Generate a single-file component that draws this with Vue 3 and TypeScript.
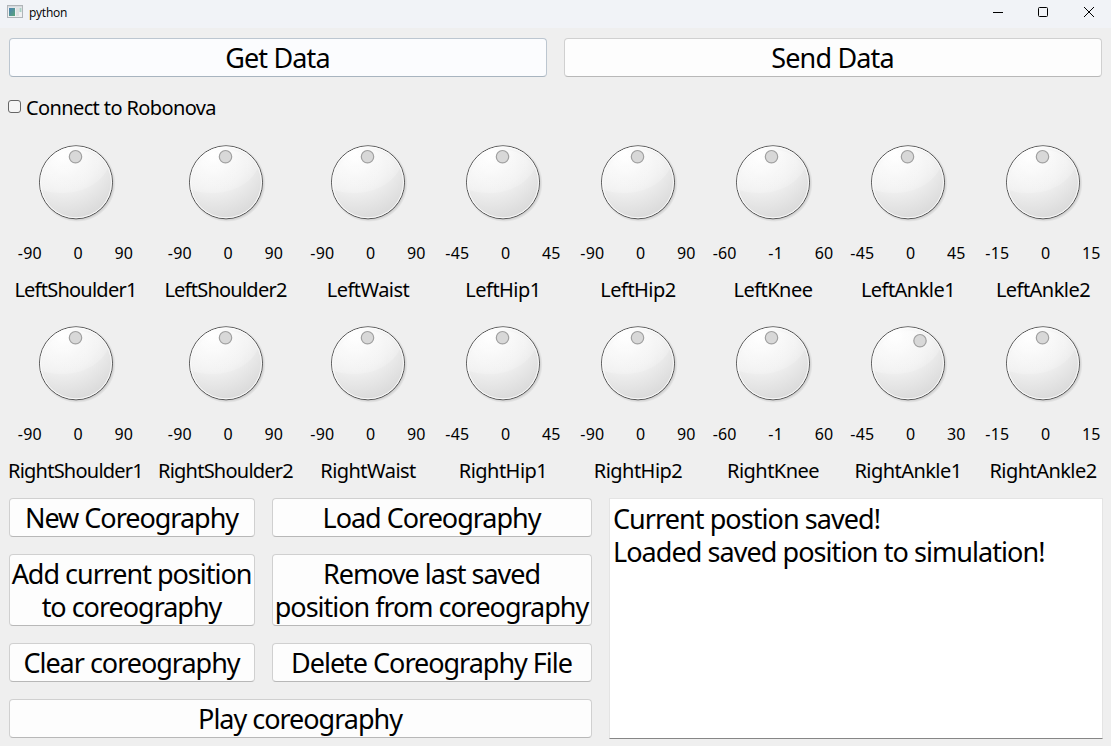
<script setup lang="ts">
interface Joint {
  name: string
  min: number
  value: number
  max: number
  knobX: number
  knobY: number
}

function joint(name: string, min: number, value: number, max: number, knobX = 40.5, knobY = 14.7): Joint {
  return { name, min, value, max, knobX, knobY }
}

const rows: Joint[][] = [
  [
    joint('LeftShoulder1', -90, 0, 90),
    joint('LeftShoulder2', -90, 0, 90),
    joint('LeftWaist', -90, 0, 90),
    joint('LeftHip1', -45, 0, 45),
    joint('LeftHip2', -90, 0, 90),
    joint('LeftKnee', -60, -1, 60, 39.5),
    joint('LeftAnkle1', -45, 0, 45),
    joint('LeftAnkle2', -15, 0, 15),
  ],
  [
    joint('RightShoulder1', -90, 0, 90),
    joint('RightShoulder2', -90, 0, 90),
    joint('RightWaist', -90, 0, 90),
    joint('RightHip1', -45, 0, 45),
    joint('RightHip2', -90, 0, 90),
    joint('RightKnee', -60, -1, 60, 39.5),
    joint('RightAnkle1', -45, 0, 30, 53, 17.7),
    joint('RightAnkle2', -15, 0, 15),
  ],
]

const messages: string[] = ['Current postion saved!', 'Loaded saved position to simulation!']
</script>

<template>
  <div class="window">
    <header class="titlebar">
      <svg class="app-icon" width="16" height="14" viewBox="0 0 16 14">
        <defs>
          <linearGradient id="appFill" x1="0" y1="0" x2="1" y2="1">
            <stop offset="0" stop-color="#4a80b4" />
            <stop offset="1" stop-color="#5aa578" />
          </linearGradient>
        </defs>
        <rect x="0.5" y="0.5" width="15" height="12" fill="#f0f1f2" stroke="#b0b4b8" />
        <rect x="1" y="1" width="14" height="1.5" fill="#d6dade" />
        <rect x="2" y="3" width="6" height="8" fill="url(#appFill)" />
        <rect x="9" y="3" width="3" height="8" fill="#dfe1e2" />
        <rect x="12.5" y="3" width="2" height="4" fill="#a9cfc4" />
      </svg>
      <span class="title">python</span>
      <div class="controls">
        <svg width="10" height="10" viewBox="0 0 10 10" overflow="visible"><path d="M1 5.5H11" stroke="#000" /></svg>
        <svg width="10" height="10" viewBox="0 0 10 10">
          <rect x="0.5" y="0.5" width="9" height="9" rx="1" fill="none" stroke="#000" />
        </svg>
        <svg width="10" height="10" viewBox="0 0 10 10"><path d="M0 0L10 10M10 0L0 10" stroke="#000" /></svg>
      </div>
    </header>

    <div class="top-actions">
      <button class="btn focused">Get Data</button>
      <button class="btn">Send Data</button>
    </div>

    <label class="connect"><span class="box"></span><span>Connect to Robonova</span></label>

    <svg class="defs" width="0" height="0">
      <defs>
        <radialGradient id="dialFill" gradientUnits="userSpaceOnUse" cx="28" cy="12" r="72">
          <stop offset="0" stop-color="#ffffff" />
          <stop offset="0.5" stop-color="#f0f0f0" />
          <stop offset="1" stop-color="#d6d6d6" />
        </radialGradient>
        <linearGradient id="dialShine" x1="0" y1="0" x2="0.6" y2="1">
          <stop offset="0" stop-color="#fff" stop-opacity="0.4" />
          <stop offset="1" stop-color="#fff" stop-opacity="0.15" />
        </linearGradient>
        <radialGradient id="dialShadow">
          <stop offset="0.9" stop-color="#000" stop-opacity="0.18" />
          <stop offset="1" stop-color="#000" stop-opacity="0" />
        </radialGradient>
      </defs>
    </svg>

    <section v-for="(row, r) in rows" :key="r" class="joints">
      <div v-for="j in row" :key="j.name" class="joint">
        <svg class="dial" width="82" height="81" viewBox="0 0 82 81">
          <circle cx="42.2" cy="41.5" r="38.5" fill="url(#dialShadow)" />
          <circle cx="41" cy="40.3" r="36.5" fill="url(#dialFill)" stroke="#555" stroke-width="1" />
          <circle cx="41" cy="40.3" r="35.5" fill="none" stroke="#fff" stroke-width="1" stroke-opacity="0.85" />
          <path d="M6 48A36 36 0 0 1 73 26C64 45 37 57 6 48Z" fill="url(#dialShine)" />
          <circle :cx="j.knobX" :cy="j.knobY" r="6.2" fill="#d8d8d8" stroke="#a0a0a0" stroke-width="1.2" />
        </svg>
        <div class="range">
          <span>{{ j.min }}</span><span>{{ j.value }}</span><span>{{ j.max }}</span>
        </div>
        <div class="name" :class="{ tight: j.name.includes('Shoulder') }">{{ j.name }}</div>
      </div>
    </section>

    <section class="bottom">
      <div class="actions">
        <button class="btn">New Coreography</button>
        <button class="btn">Load Coreography</button>
        <button class="btn">Add current position<br />to coreography</button>
        <button class="btn">Remove last saved<br />position from coreography</button>
        <button class="btn">Clear coreography</button>
        <button class="btn">Delete Coreography File</button>
        <button class="btn wide">Play coreography</button>
      </div>
      <div class="log">
        <div v-for="m in messages" :key="m">{{ m }}</div>
      </div>
    </section>
  </div>
</template>

<style>
body {
  margin: 0;
  background: #efefef;
}
</style>

<style scoped>
.window {
  width: 1111px;
  height: 746px;
  overflow: hidden;
  background: #efefef;
  color: #000;
  font-family: 'Noto Sans', 'Open Sans', sans-serif;
}
.titlebar {
  display: flex;
  height: 28px;
  box-sizing: border-box;
  padding: 0 17px 0 7px;
  background: #f1f3f7;
}
.app-icon {
  margin-top: 5px;
}
.title {
  margin-left: 6px;
  font-family: 'Open Sans', 'Noto Sans', sans-serif;
  font-size: 12px;
  line-height: 26px;
  letter-spacing: -0.25px;
}
.controls {
  display: flex;
  gap: 36px;
  margin-left: auto;
  padding-top: 7px;
}
.btn {
  display: block;
  box-sizing: border-box;
  margin: 0;
  padding: 2px 1px 2px 0;
  border: 1px solid #d0d0d0;
  border-bottom-color: #b8b8b8;
  border-radius: 4px;
  background: #fdfdfd;
  color: #000;
  font-family: inherit;
  font-size: 27px;
  line-height: 33px;
  letter-spacing: -1.02px;
  white-space: nowrap;
}
.focused {
  border-color: #bcc6d0;
  border-bottom-color: #a8b4bf;
  background: #fbfcfe;
}
.top-actions {
  display: grid;
  grid-template-columns: 538px 538px;
  gap: 17px;
  margin: 10px 0 0 9px;
}
.top-actions .btn {
  letter-spacing: -0.85px;
}
.connect {
  display: flex;
  gap: 5px;
  margin: 19px 0 0 8px;
  font-size: 20px;
  line-height: 24px;
  letter-spacing: -0.62px;
}
.box {
  width: 13px;
  height: 13px;
  box-sizing: border-box;
  margin-top: 4px;
  border: 1px solid #666;
  border-radius: 3px;
  background: #f5f5f5;
}
.defs {
  display: block;
}
.joints {
  display: grid;
  grid-template-columns: 135px 135px repeat(6, 120px);
  column-gap: 15px;
  height: 181px;
  margin-left: 8px;
}
.joint {
  display: flex;
  flex-direction: column;
  align-items: center;
  padding-top: 22px;
}
.dial {
  flex: none;
}
.range {
  display: flex;
  gap: 31.6px;
  margin-top: 20px;
  font-size: 16px;
  line-height: 20px;
  letter-spacing: 0.2px;
}
.name {
  margin-top: 15px;
  font-size: 20px;
  line-height: 24px;
  letter-spacing: -0.54px;
  white-space: nowrap;
}
.tight {
  letter-spacing: -0.76px;
}
.bottom {
  display: flex;
  gap: 17px;
  margin: 16px 0 0 9px;
}
.actions {
  display: grid;
  grid-template-columns: 246px 320px;
  grid-template-rows: 39px 72px 39px 39px;
  gap: 17px;
}
.wide {
  grid-column: 1 / 3;
}
.log {
  width: 494px;
  height: 241px;
  box-sizing: border-box;
  padding: 3px 3px;
  border: 1px solid #e4e4e4;
  border-bottom-color: #868686;
  background: #fff;
  font-size: 27px;
  line-height: 33px;
  letter-spacing: -0.94px;
}
</style>
